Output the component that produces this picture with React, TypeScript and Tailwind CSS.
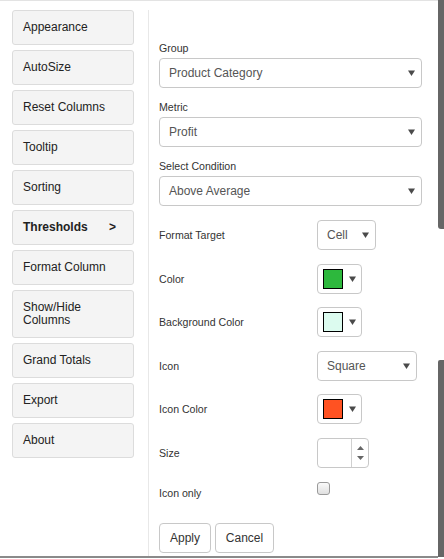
const menuItems = [
  "Appearance",
  "AutoSize",
  "Reset Columns",
  "Tooltip",
  "Sorting",
  "Thresholds",
  "Format Column",
  "Show/Hide Columns",
  "Grand Totals",
  "Export",
  "About",
];

function Caret({ className = "" }: { className?: string }) {
  return (
    <svg width="7" height="6" viewBox="0 0 7 6" className={className}>
      <path d="M0 0.5h7L3.5 6z" fill="#4a4a4a" />
    </svg>
  );
}

function MenuButton({ label }: { label: string }) {
  const active = label === "Thresholds";
  const twoLine = label === "Show/Hide Columns";
  return (
    <div
      className={
        "flex w-[122px] items-center justify-between rounded-[3px] border border-[#dcdcdc] bg-[#f4f4f4] pl-[10px] pr-[17px] text-[12px] text-[#222] " +
        (twoLine ? "h-[48px] leading-[13px]" : "h-[35px] leading-[15px]") +
        (active ? " font-bold" : "")
      }
    >
      <span className={twoLine ? "w-[60px]" : ""}>{label}</span>
      {active && <span>&gt;</span>}
    </div>
  );
}

function SelectBox({ value, width }: { value: string; width: string }) {
  return (
    <div
      className={
        "flex h-[30px] items-center justify-between rounded-[4px] border border-[#c8c8c8] bg-white pl-[9px] pr-[6px] text-[12px] text-[#555] " +
        width
      }
    >
      <span>{value}</span>
      <Caret />
    </div>
  );
}

function ColorPicker({ color }: { color: string }) {
  return (
    <div className="flex h-[30px] w-[45px] items-center gap-[6px] rounded-[4px] border border-[#c8c8c8] bg-white pl-[5px]">
      <div
        className="h-[20px] w-[20px] border border-black"
        style={{ backgroundColor: color }}
      />
      <Caret />
    </div>
  );
}

function FieldLabel({ children }: { children: string }) {
  return (
    <div className="mb-[3px] h-[14px] text-[10.6px] leading-[14px] text-[#333]">
      {children}
    </div>
  );
}

function Row({ label, children }: { label: string; children: React.ReactNode }) {
  return (
    <div className="flex h-[30px] items-center">
      <div className="w-[158px] pt-[2px] text-[10.6px] text-[#333]">{label}</div>
      {children}
    </div>
  );
}

export default function App() {
  return (
    <div
      className="flex h-[559px] w-[444px] bg-white"
      style={{ fontFamily: "'Liberation Sans', Arial, sans-serif" }}
    >
      <div className="flex h-[558px] w-[438px] border-t border-b-2 border-t-[#e3e3e3] border-b-[#8a8a8a]">
        <div className="flex w-[148px] flex-col gap-[5px] pl-[12px] pt-[9px]">
          {menuItems.map((item) => (
            <MenuButton key={item} label={item} />
          ))}
        </div>
        <div className="mt-[9px] flex flex-1 flex-col border-l border-[#e8e8e8] pl-[10px] pt-[31px]">
          <FieldLabel>Group</FieldLabel>
          <SelectBox value="Product Category" width="w-[263px]" />
          <div className="mt-[12px]" />
          <FieldLabel>Metric</FieldLabel>
          <SelectBox value="Profit" width="w-[263px]" />
          <div className="mt-[12px]" />
          <FieldLabel>Select Condition</FieldLabel>
          <SelectBox value="Above Average" width="w-[263px]" />

          <div className="mt-[14px] flex flex-col gap-[13.5px]">
            <Row label="Format Target">
              <SelectBox value="Cell" width="w-[59px]" />
            </Row>
            <Row label="Color">
              <ColorPicker color="#2db83d" />
            </Row>
            <Row label="Background Color">
              <ColorPicker color="#dcfbef" />
            </Row>
            <Row label="Icon">
              <SelectBox value="Square" width="w-[100px]" />
            </Row>
            <Row label="Icon Color">
              <ColorPicker color="#ff5222" />
            </Row>
            <Row label="Size">
              <div className="flex h-[30px] w-[52px] rounded-[4px] border border-[#c8c8c8] bg-white">
                <div className="flex-1" />
                <div className="flex w-[17px] flex-col items-center justify-center gap-[6px] border-l border-[#d0d0d0]">
                  <svg width="7" height="4" viewBox="0 0 7 4">
                    <path d="M0 4h7L3.5 0z" fill="#666" />
                  </svg>
                  <svg width="7" height="4" viewBox="0 0 7 4">
                    <path d="M0 0h7L3.5 4z" fill="#666" />
                  </svg>
                </div>
              </div>
            </Row>
          </div>

          <div className="mt-[12px] flex h-[20px] items-start">
            <div className="w-[158px] pt-[6px] text-[10.6px] text-[#333]">Icon only</div>
            <div className="mt-[2px] h-[13px] w-[13px] rounded-[3px] border border-[#9a9a9a] bg-gradient-to-b from-[#fafafa] to-[#e0e0e0]" />
          </div>

          <div className="mt-[23px] flex gap-[4px]">
            <div className="flex h-[30px] w-[52px] items-center justify-center rounded-[4px] border border-[#c8c8c8] bg-white text-[12px] text-[#333]">
              Apply
            </div>
            <div className="flex h-[30px] w-[59px] items-center justify-center rounded-[4px] border border-[#c8c8c8] bg-white text-[12px] text-[#333]">
              Cancel
            </div>
          </div>
        </div>
      </div>
      <div className="flex w-[6px] flex-col">
        <div className="h-[229px] rounded-bl-[3px] bg-[#666]" />
        <div className="h-[131px]" />
        <div className="h-[197px] rounded-tl-[2px] bg-[#666]" />
      </div>
    </div>
  );
}
